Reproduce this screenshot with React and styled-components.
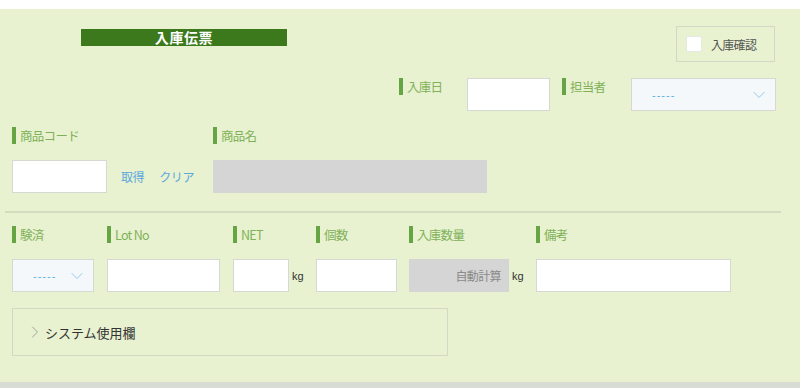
import React from "react";
import styled, { createGlobalStyle } from "styled-components";
import { ChevronDown, ChevronRight } from "lucide-react";

const GlobalStyle = createGlobalStyle`
  body {
    margin: 0;
    background: #fff;
    font-family: "Noto Sans CJK JP", "Noto Sans", sans-serif;
  }
`;

const Label = ({ children }) => (
  <LabelWrap>
    <LabelBar />
    <LabelText>{children}</LabelText>
  </LabelWrap>
);

const Select = ({ width, dashLeft }) => (
  <SelectBox width={width} dashLeft={dashLeft}>
    <Dashes>-----</Dashes>
    <ChevronDown size={20} strokeWidth={1} color="#7cbfe2" />
  </SelectBox>
);

const App = () => {
  return (
    <>
      <GlobalStyle />
      <TopStrip />
      <Panel>
        <Header>
          <Title>入庫伝票</Title>
          <CheckCard>
            <CheckSquare />
            <CheckText>入庫確認</CheckText>
          </CheckCard>
        </Header>

        <RightRow>
          <Field width={68} row>
            <Label>入庫日</Label>
          </Field>
          <Input width={83} />
          <Field width={69} row style={{ marginLeft: 12 }}>
            <Label>担当者</Label>
          </Field>
          <Select width={145} dashLeft={20} />
        </RightRow>

        <Row top={16}>
          <Field width={201}>
            <Label>商品コード</Label>
            <InputLine>
              <Input width={95} />
              <LinkText gap={14}>取得</LinkText>
              <LinkText gap={15}>クリア</LinkText>
            </InputLine>
          </Field>
          <Field>
            <Label>商品名</Label>
            <GrayBox width={274} />
          </Field>
        </Row>

        <Divider />

        <Row top={13}>
          <Field width={95}>
            <Label>験済</Label>
            <Select width={82} dashLeft={20} />
          </Field>
          <Field width={126}>
            <Label>Lot No</Label>
            <Input width={113} />
          </Field>
          <Field width={83}>
            <Label>NET</Label>
            <InputLine>
              <Input width={56} />
              <Unit>kg</Unit>
            </InputLine>
          </Field>
          <Field width={93}>
            <Label>個数</Label>
            <Input width={81} />
          </Field>
          <Field width={127}>
            <Label>入庫数量</Label>
            <InputLine>
              <GrayBox width={100}>
                <AutoText>自動計算</AutoText>
              </GrayBox>
              <Unit>kg</Unit>
            </InputLine>
          </Field>
          <Field>
            <Label>備考</Label>
            <Input width={195} />
          </Field>
        </Row>

        <SystemBox>
          <ChevronRight size={20} strokeWidth={1.1} color="#9a9a9a" />
          <SystemText>システム使用欄</SystemText>
        </SystemBox>
      </Panel>
      <BottomStrip />
    </>
  );
};

export default App;

const TopStrip = styled.div`
  height: 9px;
  background: #fff;
`;
const Panel = styled.div`
  background: #e8f1d0;
  height: 373px;
  box-sizing: border-box;
  padding-top: 17px;
`;
const BottomStrip = styled.div`
  height: 6px;
  background: #d9dcd5;
`;
const Header = styled.div`
  display: flex;
  align-items: flex-start;
  padding: 0 25px 0 81px;
`;
const Title = styled.div`
  margin-top: 3px;
  width: 206px;
  height: 17px;
  background: #3b791c;
  color: #fff;
  font-weight: 700;
  font-size: 14px;
  line-height: 16px;
  text-align: center;
  letter-spacing: 0.6px;
`;
const CheckCard = styled.div`
  margin-left: auto;
  width: 99px;
  height: 36px;
  box-sizing: border-box;
  border: 1px solid #d3d8c6;
  display: flex;
  align-items: center;
  padding-left: 9px;
`;
const CheckSquare = styled.div`
  width: 16px;
  height: 16px;
  box-sizing: border-box;
  background: #fff;
  border: 1px solid #e6e8e2;
  border-radius: 2px;
`;
const CheckText = styled.span`
  margin-left: 9px;
  font-size: 12px;
  letter-spacing: -0.7px;
  color: #555;
`;
const RightRow = styled.div`
  display: flex;
  justify-content: flex-end;
  padding-right: 24px;
  margin-top: 16px;
`;
const Row = styled.div`
  display: flex;
  padding-left: 12px;
  margin-top: ${(p) => p.top}px;
`;
const Field = styled.div`
  display: flex;
  flex-direction: ${(p) => (p.row ? "row" : "column")};
  gap: 16px;
  width: ${(p) => (p.width ? `${p.width}px` : "auto")};
  flex-shrink: 0;
`;
const LabelWrap = styled.div`
  display: flex;
  align-items: center;
  height: 17px;
`;
const LabelBar = styled.div`
  width: 4px;
  height: 17px;
  background: #66a544;
`;
const LabelText = styled.span`
  margin-left: 4px;
  font-size: 12.5px;
  letter-spacing: -0.7px;
  color: #80b158;
  white-space: nowrap;
`;
const InputLine = styled.div`
  display: flex;
  align-items: center;
`;
const Input = styled.div`
  width: ${(p) => p.width}px;
  height: 33px;
  box-sizing: border-box;
  background: #fff;
  border: 1px solid #d6d8d2;
  flex-shrink: 0;
`;
const GrayBox = styled.div`
  width: ${(p) => p.width}px;
  height: 33px;
  background: #d4d5d4;
  display: flex;
  align-items: center;
  justify-content: flex-end;
  flex-shrink: 0;
`;
const AutoText = styled.span`
  margin-right: 8px;
  font-size: 12px;
  letter-spacing: -0.6px;
  color: #8a8a8a;
`;
const Unit = styled.span`
  margin-left: 3px;
  font-family: "Liberation Sans", sans-serif;
  font-size: 11px;
  color: #333;
`;
const LinkText = styled.span`
  margin-left: ${(p) => p.gap}px;
  font-size: 12px;
  letter-spacing: -0.4px;
  color: #5aa8dc;
`;
const SelectBox = styled.div`
  width: ${(p) => p.width}px;
  height: 33px;
  box-sizing: border-box;
  background: #f5f8fa;
  border: 1px solid #d6d8d2;
  display: flex;
  align-items: center;
  justify-content: space-between;
  padding: 0 6px 0 ${(p) => p.dashLeft}px;
  flex-shrink: 0;
`;
const Dashes = styled.span`
  font-family: "Liberation Sans", sans-serif;
  font-size: 11px;
  letter-spacing: 1px;
  color: #5ab2e2;
`;
const Divider = styled.div`
  margin: 18px 19px 0 5px;
  height: 2px;
  background: #d4dcc0;
`;
const SystemBox = styled.div`
  margin: 16px 0 0 12px;
  width: 436px;
  height: 48px;
  box-sizing: border-box;
  border: 1px solid #d3d8c6;
  display: flex;
  align-items: center;
  padding-left: 12px;
`;
const SystemText = styled.span`
  font-size: 13px;
  color: #333;
`;
